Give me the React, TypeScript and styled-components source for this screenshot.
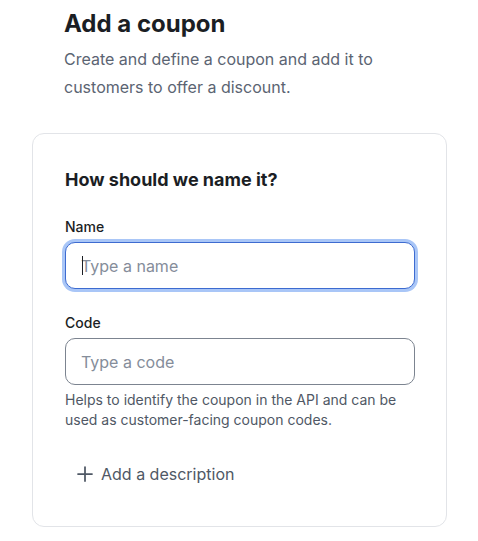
import styled, { createGlobalStyle } from 'styled-components';

const GlobalStyle = createGlobalStyle`
  body {
    margin: 0;
    background: #ffffff;
    font-family: Inter, "Noto Sans", sans-serif;
    -webkit-font-smoothing: antialiased;
  }
  * {
    box-sizing: border-box;
  }
`;

const App: React.FC = () => {
  return (
    <Page>
      <GlobalStyle />
      <Header>
        <Title>Add a coupon</Title>
        <Subtitle>
          Create and define a coupon and add it to customers to offer a discount.
        </Subtitle>
      </Header>
      <Card>
        <CardTitle>How should we name it?</CardTitle>
        <Field>
          <Label htmlFor="coupon-name">Name</Label>
          <InputWrap>
            <Input id="coupon-name" placeholder="Type a name" $focused />
            <Caret />
          </InputWrap>
        </Field>
        <Field>
          <Label htmlFor="coupon-code">Code</Label>
          <Input id="coupon-code" placeholder="Type a code" />
          <Hint>
            Helps to identify the coupon in the API and can be used as
            customer-facing coupon codes.
          </Hint>
        </Field>
        <AddButton type="button">
          <svg width="16" height="16" viewBox="0 0 16 16" fill="none">
            <path
              d="M8 1v14M1 8h14"
              stroke="currentColor"
              strokeWidth="1.75"
              strokeLinecap="round"
            />
          </svg>
          Add a description
        </AddButton>
      </Card>
    </Page>
  );
};

export default App;

const Page = styled.div`
  padding: 8px 31px 0 32px;
`;

const Header = styled.div`
  padding: 0 32px;
`;

const Title = styled.h1`
  margin: 0;
  font-size: 24px;
  line-height: 32px;
  font-weight: 700;
  color: #1b1e24;
`;

const Subtitle = styled.p`
  margin: 5px 0 0;
  font-size: 16px;
  line-height: 28px;
  color: #5b6472;
`;

const Card = styled.div`
  margin-top: 32px;
  border: 1px solid #e2e4e8;
  border-radius: 12px;
  padding: 32px 31px 32px 32px;
`;

const CardTitle = styled.h2`
  margin: 0 0 23px;
  font-size: 18px;
  line-height: 28px;
  font-weight: 700;
  color: #1b1e24;
`;

const Field = styled.div`
  display: flex;
  flex-direction: column;
  & + & {
    margin-top: 24px;
  }
`;

const Label = styled.label`
  font-size: 14px;
  line-height: 20px;
  font-weight: 500;
  color: #1b1e24;
  margin-bottom: 5px;
`;

const InputWrap = styled.div`
  position: relative;
`;

const Input = styled.input<{ $focused?: boolean }>`
  width: 100%;
  height: 47px;
  padding: 0 15px;
  border-radius: 10px;
  font-family: inherit;
  font-size: 16px;
  color: #1b1e24;
  background: #ffffff;
  outline: none;
  border: 1px solid ${(p) => (p.$focused ? '#3d6bd0' : '#7c8490')};
  box-shadow: ${(p) => (p.$focused ? '0 0 0 3px #a9c6f7' : 'none')};

  &::placeholder {
    color: #858d9a;
  }
`;

const Caret = styled.span`
  position: absolute;
  left: 17px;
  top: 14px;
  width: 1px;
  height: 19px;
  background: #1b1e24;
`;

const Hint = styled.p`
  margin: 5px 0 0;
  font-size: 14px;
  line-height: 20px;
  color: #4f5865;
`;

const AddButton = styled.button`
  display: inline-flex;
  align-items: center;
  gap: 8px;
  align-self: flex-start;
  margin-top: 24px;
  padding: 8px 12px;
  border: none;
  background: transparent;
  font-family: inherit;
  font-size: 16px;
  line-height: 24px;
  color: #4f5865;
  cursor: pointer;
`;
